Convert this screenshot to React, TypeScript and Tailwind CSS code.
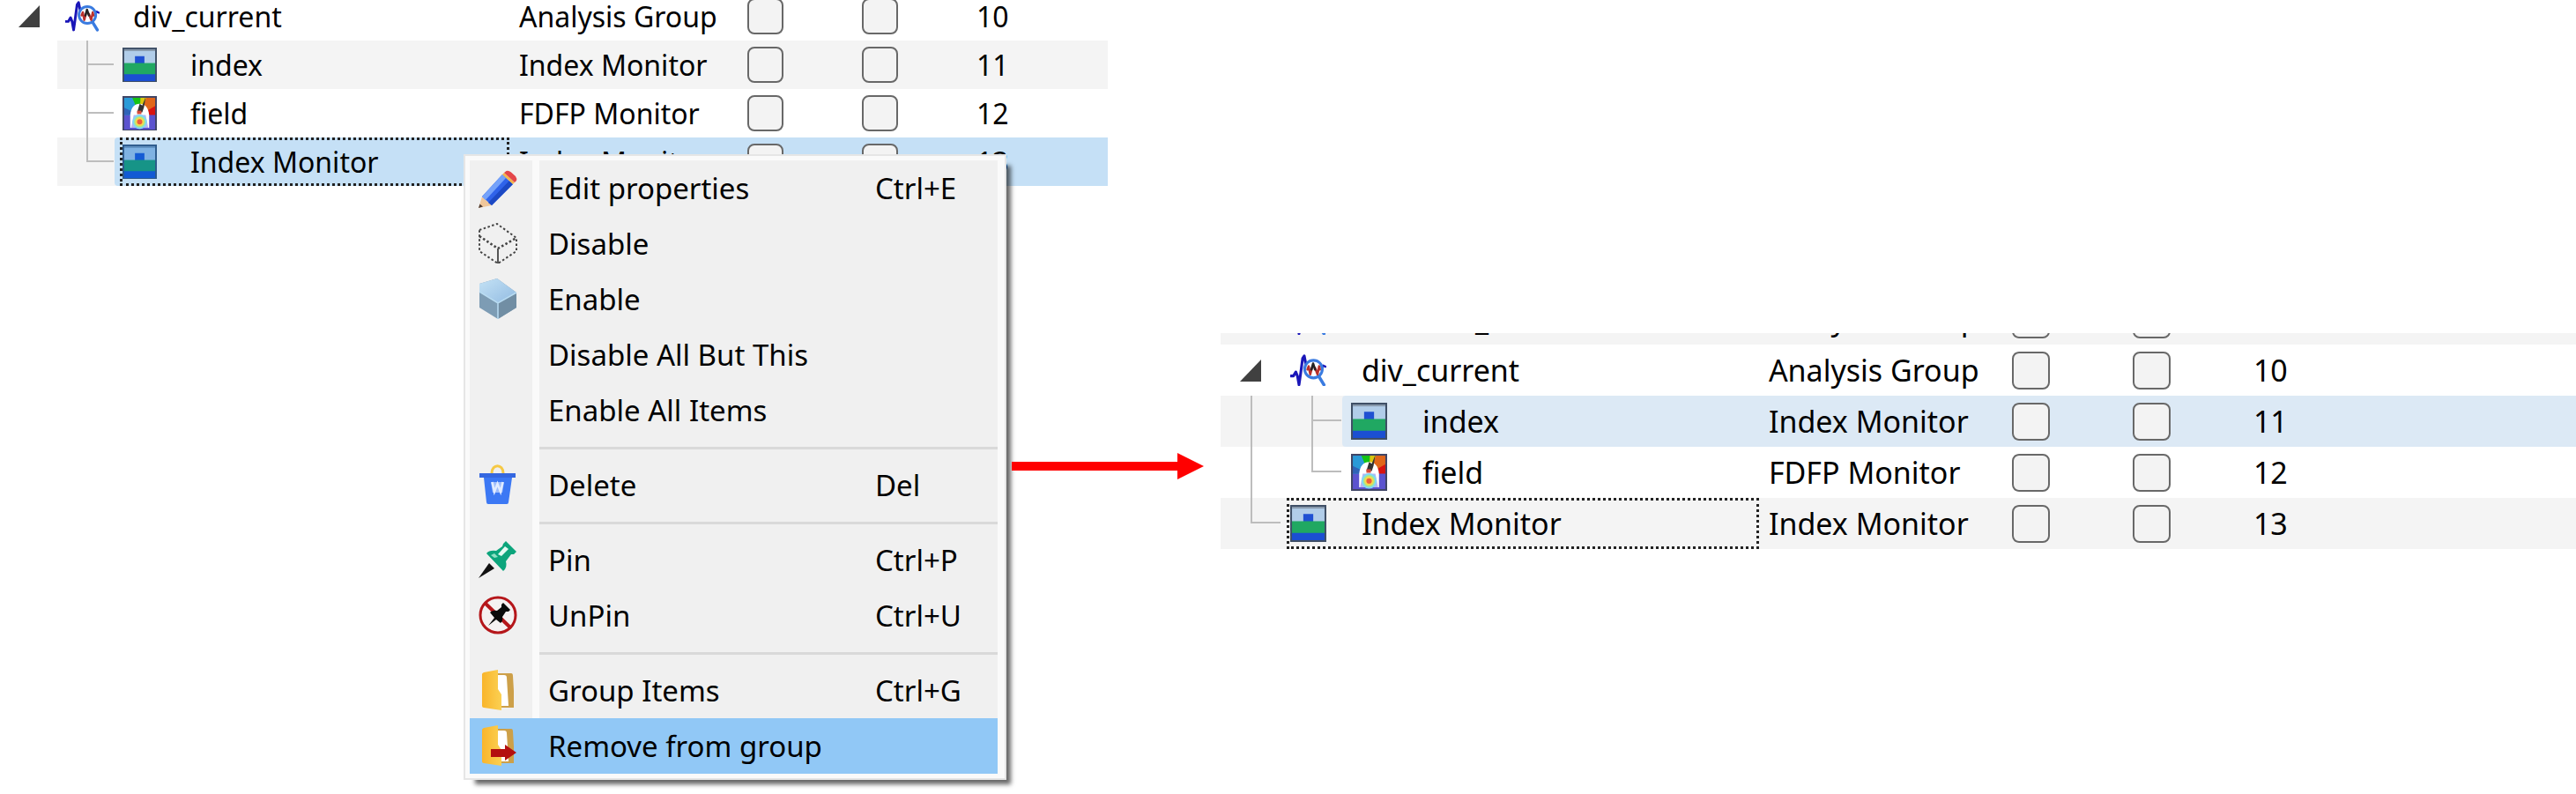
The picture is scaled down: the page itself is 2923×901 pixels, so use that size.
import type { ReactNode } from "react";
import { clsx } from "clsx";

type Guide = "none" | "blank" | "pass" | "tee" | "elbow" | "arrow";

type TreeRow = {
  name: string;
  type: string;
  order: number;
  icon: ReactNode;
  guides: Guide[];
  striped?: boolean;
  hovered?: boolean;
  selected?: boolean;
  focused?: boolean;
};

type MenuEntry = {
  label: string;
  shortcut?: string;
  icon?: ReactNode;
  active?: boolean;
};

function WaveIcon() {
  return (
    <svg viewBox="0 0 45 40" className="w-full" fill="none" strokeLinecap="round" strokeLinejoin="round">
      <path d="M1 27H4L7 22L9 27L11 38L13 24L15.500 5L17.500 2L19.500 12L21 23" stroke="#1a16b8" strokeWidth="3.400" />
      <path d="M39 18L41 14L44 15.500" stroke="#1a16b8" strokeWidth="2.600" />
      <circle cx="29" cy="18.500" r="11" fill="#fff" stroke="#3a7be0" strokeWidth="3.400" />
      <path d="M21.500 19L23 15L25 25L27 17M31 17L34 25L36 15L37 19" stroke="#b8302c" strokeWidth="2.800" />
      <path d="M26.500 19L28.500 11.500L31 19" stroke="#222" strokeWidth="2.800" />
      <path d="M36.500 29L42 38" stroke="#3a7be0" strokeWidth="4" />
    </svg>
  );
}

function IndexIcon({ tinted = false }: { tinted?: boolean }) {
  return (
    <svg viewBox="0 0 40 41" className="w-full">
      <rect x="1" y="1" width="38" height="39" fill={tinted ? "#7fb2e3" : "#b1cde9"} />
      <rect x="14.500" y="10" width="11" height="9" fill={tinted ? "#145bd4" : "#1f50d2"} />
      <rect x="1" y="18" width="38" height="14" fill={tinted ? "#169487" : "#20a862"} />
      <rect x="1" y="31" width="38" height="9" fill={tinted ? "#125ad4" : "#1b4fd2"} />
      <rect x="1" y="1" width="38" height="39" fill="none" stroke={tinted ? "#2d5a8c" : "#3f4f66"} strokeWidth="2" />
      <rect x="2" y="2" width="36" height="2" fill={tinted ? "#5f8fc0" : "#8798ab"} />
    </svg>
  );
}

function FieldIcon() {
  return (
    <svg viewBox="0 0 40 41" className="w-full">
      <rect x="1" y="1" width="38" height="39" fill="#5b53cf" />
      <path d="M1 1H12L20 22H1Z" fill="#2a9ad8" />
      <path d="M1 13L20 22H1Z" fill="#2f63b8" />
      <path d="M11 1H22L20 22Z" fill="#14c414" />
      <path d="M21 1H29L20 22Z" fill="#d9c70e" />
      <path d="M28 1H39V12L20 22Z" fill="#e0661a" />
      <path d="M39 11V22H20Z" fill="#d81410" />
      <path d="M9 22C10 13 14 9 20 9C26 9 30 13 31 22V37H9Z" fill="#fff" />
      <path d="M13 22H27L30 37H10Z" fill="#b9b4f0" />
      <path d="M17 19L20 9L23 11L27 1L25 13L23 19Z" fill="#333" />
      <path d="M17 17H22V21H17Z" fill="#d84b3a" />
      <circle cx="20" cy="30" r="8.500" fill="#7fd8f4" />
      <circle cx="20" cy="30" r="6.500" fill="#a8e88c" />
      <circle cx="20" cy="30" r="5" fill="#f6d84a" />
      <circle cx="20" cy="30" r="3" fill="#ee5c3c" />
      <rect x="1" y="1" width="38" height="39" fill="none" stroke="#3f4566" strokeWidth="2" />
    </svg>
  );
}

function PencilIcon() {
  return (
    <svg viewBox="0 0 44 48">
      <path d="M0 46L4 33L15 43Z" fill="#f0c79b" />
      <path d="M0 46L1.500 41.500L5 44.500Z" fill="#4a3a34" />
      <path d="M4 33L27 8L39 19L15 43Z" fill="#2f63ea" />
      <path d="M4 33L27 8L31 12L8 37Z" fill="#74a2fa" />
      <path d="M11 40L35 15L39 19L15 43Z" fill="#1c49c4" />
      <path d="M27 8L29 6L41 17L39 19Z" fill="#f4b54e" />
      <path d="M29 6L31.500 4Q34 3 37 5.500L42 10Q44 13 43 15L41 17Z" fill="#e4474a" />
    </svg>
  );
}

function GhostCubeIcon() {
  return (
    <svg viewBox="0 0 44 48" fill="none" stroke="#444" strokeWidth="2" strokeDasharray="2.500 2.500">
      <path d="M1 8L21 1L43 17V32L22 46L1 32V8" />
      <path d="M1 15L22 29L43 17" strokeWidth="2.600" />
      <path d="M22 29V46" strokeDasharray="none" stroke="#555" />
    </svg>
  );
}

function CubeIcon() {
  return (
    <svg viewBox="0 0 44 48">
      <defs>
        <linearGradient id="cube-top" x1="0" y1="0" x2="1" y2="1">
          <stop offset="0" stopColor="#c4e2f5" />
          <stop offset="1" stopColor="#92bbe2" />
        </linearGradient>
      </defs>
      <path d="M1 6L21 0L43 16V33L22 46L1 33Z" fill="#7d9cb4" />
      <path d="M22 27L43 16V33L22 46Z" fill="#718ea4" />
      <path d="M1 6L21 0L43 16L22 28L1 15Z" fill="url(#cube-top)" />
      <path d="M1 15L22 28L43 16M22 28V46" fill="none" stroke="#b9dcf2" strokeWidth="1.500" />
    </svg>
  );
}

function TrashIcon() {
  return (
    <svg viewBox="0 0 44 48">
      <path d="M15 10C15 -1 28 -1 28 10" fill="none" stroke="#f6c945" strokeWidth="3" />
      <path d="M1 10H42V15H38L34 43Q34 45 32 45H11Q9 45 9 43L6 15H1Z" fill="#3c78f4" />
      <path d="M1 10H42V15H1Z" fill="#3567e0" />
      <path d="M14 20H29L27 32H16Z" fill="#9dbcfb" />
      <path d="M15.500 20L18 31L21.500 22L25 31L27.500 20" fill="none" stroke="#e2ecff" strokeWidth="2.500" />
    </svg>
  );
}

function PinIcon() {
  return (
    <svg viewBox="0 0 44 48">
      <path d="M0 44L12 27L18 33Z" fill="#111" />
      <path d="M9 16Q12 12 20 13L27 8L28 5L31 2L43 14L40 17L37 17L31 25Q33 32 28 36Z" fill="#0ca57c" />
      <path d="M22 17L30 8L34 11L26 19Z" fill="#e4fbf3" />
      <path d="M14 18L18 16L22 20L18 21Z" fill="#8fe0c4" />
    </svg>
  );
}

function UnpinIcon() {
  return (
    <svg viewBox="0 0 44 48">
      <circle cx="22" cy="23" r="20" fill="#f5f1f1" stroke="#b5161a" strokeWidth="3" />
      <path d="M7 9L37 38" stroke="#b5161a" strokeWidth="4" />
      <path d="M11 35L18 26L13 20Q16 17 21 18L26 14L26 11L28 9L36 17L34 19L31 19L27 25Q28 30 25 32L20 28Z" fill="#0a0a0a" />
    </svg>
  );
}

function FolderIcon({ removing = false }: { removing?: boolean }) {
  return (
    <svg viewBox="0 0 44 48">
      <defs>
        <linearGradient id="folder-front">
          <stop offset="0" stopColor="#f9b52b" />
          <stop offset="1" stopColor="#fbd052" />
        </linearGradient>
      </defs>
      <path d="M20 4H37Q39 4 39 7L40 24V43H20Z" fill="#cda049" />
      <path d="M21 6H29Q32 6 32 9L34 41H22Z" fill="#fff" />
      <path d="M4 5Q4 4 6 3L22 0V22L26 28V46L6 43Q4 43 4 41Z" fill="url(#folder-front)" />
      {removing && <path d="M14 27H30V22L43 31L30 40V36H14Z" fill="#b3100f" />}
    </svg>
  );
}

const beforeRows: TreeRow[] = [
  { name: "div_current", type: "Analysis Group", order: 10, icon: <WaveIcon />, guides: ["arrow"] },
  { name: "index", type: "Index Monitor", order: 11, icon: <IndexIcon />, guides: ["blank", "tee"], striped: true },
  { name: "field", type: "FDFP Monitor", order: 12, icon: <FieldIcon />, guides: ["blank", "tee"] },
  { name: "Index Monitor", type: "Index Monitor", order: 13, icon: <IndexIcon tinted />, guides: ["blank", "elbow"], striped: true, selected: true, focused: true },
];

const afterRows: TreeRow[] = [
  { name: "div_current", type: "Analysis Group", order: 10, icon: <WaveIcon />, guides: ["arrow"] },
  { name: "index", type: "Index Monitor", order: 11, icon: <IndexIcon />, guides: ["pass", "tee"], striped: true, hovered: true },
  { name: "field", type: "FDFP Monitor", order: 12, icon: <FieldIcon />, guides: ["pass", "elbow"] },
  { name: "Index Monitor", type: "Index Monitor", order: 13, icon: <IndexIcon />, guides: ["elbow"], striped: true, focused: true },
];

const menuGroups: MenuEntry[][] = [
  [
    { label: "Edit properties", shortcut: "Ctrl+E", icon: <PencilIcon /> },
    { label: "Disable", icon: <GhostCubeIcon /> },
    { label: "Enable", icon: <CubeIcon /> },
    { label: "Disable All But This" },
    { label: "Enable All Items" },
  ],
  [{ label: "Delete", shortcut: "Del", icon: <TrashIcon /> }],
  [
    { label: "Pin", shortcut: "Ctrl+P", icon: <PinIcon /> },
    { label: "UnPin", shortcut: "Ctrl+U", icon: <UnpinIcon /> },
  ],
  [
    { label: "Group Items", shortcut: "Ctrl+G", icon: <FolderIcon /> },
    { label: "Remove from group", icon: <FolderIcon removing />, active: true },
  ],
];

function GuideCell({ kind, large }: { kind: Guide; large: boolean }) {
  return (
    <span className={clsx("grid h-full shrink-0 grid-cols-2 grid-rows-2", large ? "w-[69px]" : "w-[65px]", kind === "blank" && "bg-white")}>
      {kind === "arrow" && (
        <button type="button" aria-label="Collapse" className="col-span-2 row-span-2 flex items-center justify-center">
          <svg viewBox="0 0 24 25" className="w-6">
            <path d="M24 0V25H0Z" fill="#404040" />
          </svg>
        </button>
      )}
      {(kind === "tee" || kind === "elbow") && (
        <span className="col-start-2 mr-px border-b-2 border-l-2 border-[#bdbdbd]" />
      )}
      {kind === "tee" && <span className="col-start-2 border-l-2 border-[#bdbdbd]" />}
      {kind === "pass" && <span className="col-start-2 row-span-2 border-l-2 border-[#bdbdbd]" />}
    </span>
  );
}

function Check({ label, large }: { label: string; large: boolean }) {
  return (
    <input
      type="checkbox"
      aria-label={label}
      className={clsx(
        "block appearance-none rounded-lg border-2 border-[#686868] bg-[#f3f3f3]",
        large ? "size-[43px]" : "size-[41px]",
      )}
    />
  );
}

function Tree({ rows, large = false }: { rows: TreeRow[]; large?: boolean }) {
  return (
    <table className={clsx("w-full table-fixed", large ? "text-[34px]" : "text-[32px]")}>
      <colgroup>
        <col className={large ? "w-[611px]" : "w-[578px]"} />
        <col className={large ? "w-[287px]" : "w-[270px]"} />
        <col className={large ? "w-[137px]" : "w-[130px]"} />
        <col className={large ? "w-[137px]" : "w-[130px]"} />
        <col />
      </colgroup>
      <tbody>
        {rows.map((row, i) => {
          const tint = clsx(row.hovered && "bg-[#dce9f5]", row.selected && "bg-[#c5e0f6]");
          return (
            <tr key={i} className={clsx(large ? "h-[58px]" : "h-[55px]", row.striped && "bg-[#f4f4f4]")}>
              <td className="p-0">
                <div className={clsx("flex", large ? "h-[58px]" : "h-[55px]")}>
                  {row.guides.map((kind, g) => (
                    <GuideCell key={g} kind={kind} large={large} />
                  ))}
                  <div className={clsx("relative flex flex-1 items-center rounded-l", tint)}>
                    <span className={clsx("shrink-0", large ? "w-[91px]" : "w-[86px]")}>
                      <span className={clsx("block", large ? "ml-[10px] w-[41px]" : "ml-[9px] w-[39px]")}>{row.icon}</span>
                    </span>
                    <span className="whitespace-nowrap">{row.name}</span>
                    {row.focused && (
                      <span className="absolute inset-y-0 right-0 left-[6px] border-3 border-dotted border-[#222]" />
                    )}
                  </div>
                </div>
              </td>
              <td className={clsx("py-0 pr-0 pl-[11px] whitespace-nowrap", tint)}>{row.type}</td>
              <td className={clsx("p-0", tint)}>
                <Check label={`${row.name} first option`} large={large} />
              </td>
              <td className={clsx("p-0", tint)}>
                <Check label={`${row.name} second option`} large={large} />
              </td>
              <td className={clsx("p-0", tint)}>{row.order}</td>
            </tr>
          );
        })}
      </tbody>
    </table>
  );
}

function ContextMenu() {
  return (
    <div
      role="menu"
      className="absolute top-[175px] left-[526px] w-[616px] border-2 border-[#e6e6e6] bg-[#fafafa] py-[5px] pr-2 pl-[5px] text-[33px] shadow-[9px_9px_5px_-4px_rgba(0,0,0,0.6)]"
    >
      {menuGroups.map((group, g) => (
        <div key={g}>
          {g > 0 && (
            <div className="flex h-[22px]">
              <span className="w-[71px] bg-[#f0f0f0]" />
              <span className="ml-2 flex flex-1 items-center bg-[#f0f0f0]">
                <span className="h-[3px] flex-1 bg-[#d9d9d9]" />
              </span>
            </div>
          )}
          {group.map((entry) => (
            <button
              key={entry.label}
              type="button"
              role="menuitem"
              className={clsx("flex h-[63px] w-full text-left", entry.active && "bg-[#91c8f6]")}
            >
              <span className={clsx("flex w-[71px] items-center pl-[10px]", !entry.active && "bg-[#f0f0f0]")}>
                <span className="w-11">{entry.icon}</span>
              </span>
              <span className={clsx("ml-2 flex flex-1 items-center pl-[10px]", !entry.active && "bg-[#f0f0f0]")}>
                <span className="flex-1 whitespace-nowrap">{entry.label}</span>
                <span className="w-[139px]">{entry.shortcut}</span>
              </span>
            </button>
          ))}
        </div>
      ))}
    </div>
  );
}

export default function App() {
  return (
    <main className="flex items-start bg-white font-['Noto_Sans','Open_Sans',sans-serif] leading-none text-black">
      <section className="relative h-screen w-[43%] overflow-hidden">
        <div className="-mt-[9px]">
          <Tree rows={beforeRows} />
        </div>
        <ContextMenu />
      </section>

      <svg viewBox="0 0 218 30" className="relative mt-[514px] -ml-[109px] w-[218px] shrink-0" fill="#ff0000">
        <path d="M0 10H188V0L218 15L188 30V20H0Z" />
      </svg>

      <section className="mt-[378px] ml-[19px] flex-1">
        {/* tail of the row scrolled out of view above */}
        <div className="flex h-[13px] flex-col justify-end overflow-hidden bg-[#f4f4f4]">
          <Tree large rows={[{ name: "monitor_1", type: "Analysis Group", order: 9, icon: <WaveIcon />, guides: ["none"], striped: true }]} />
        </div>
        <Tree large rows={afterRows} />
      </section>
    </main>
  );
}
